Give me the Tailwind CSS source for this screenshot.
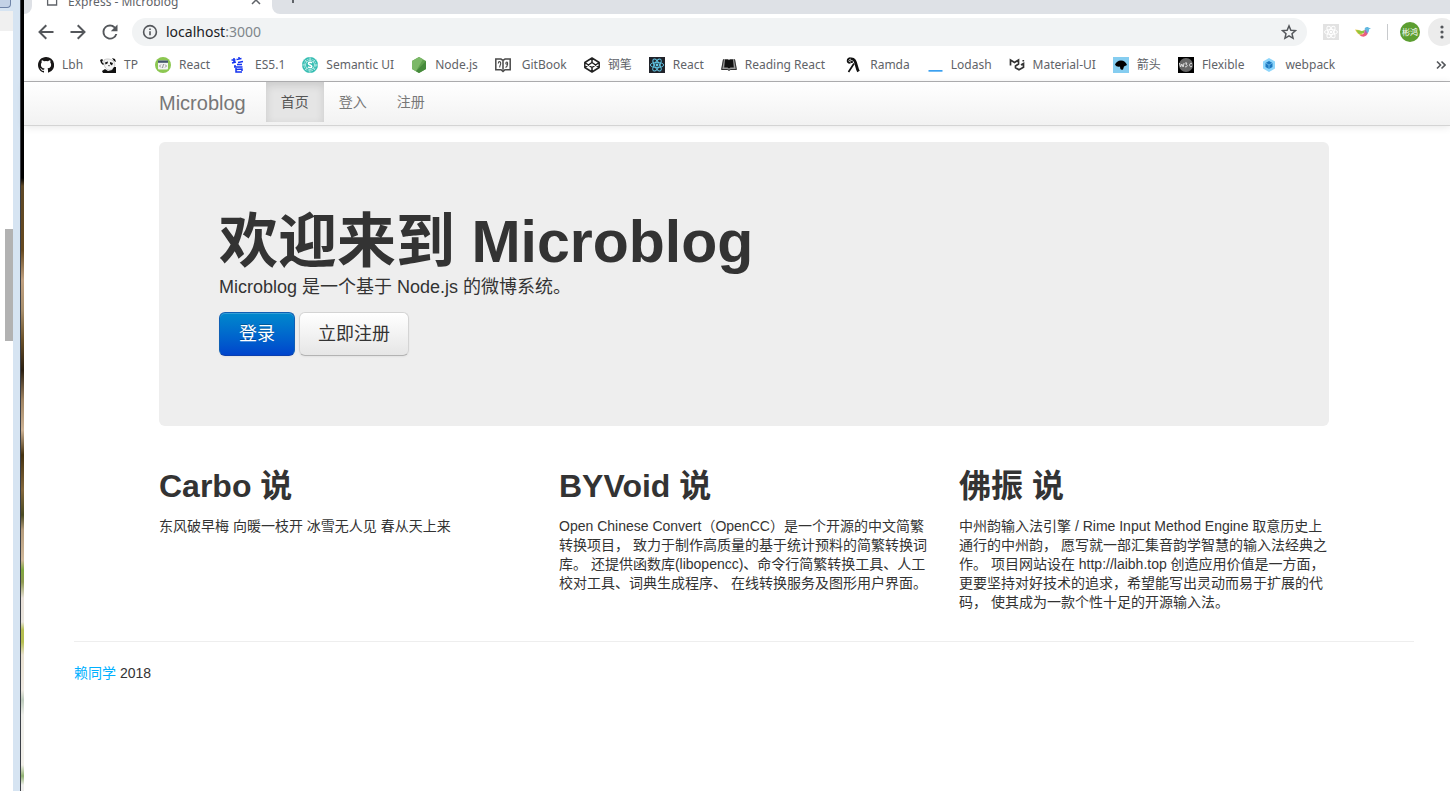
<!DOCTYPE html>
<html lang="zh-CN">
<head>
<meta charset="utf-8">
<title>Express - Microblog</title>
<script src="https://cdn.jsdelivr.net/npm/@tailwindcss/browser@4"></script>
</head>
<body class="min-h-screen overflow-hidden bg-white font-['Liberation_Sans','Noto_Sans_CJK_SC',sans-serif] text-sm text-[#333]">
<div class="flex min-h-screen">
  <!-- neighbouring window and desktop edge -->
  <aside class="flex w-6 shrink-0 bg-[#d6e4f2]">
    <div class="flex w-[13px] flex-col items-end bg-white">
      <div class="h-[11px] w-full bg-[#d6e4f2]"><div class="h-2 w-[11px] rounded-br-sm border-r border-b border-[#6f84a8] bg-[#c3d2e6]"></div></div>
      <div class="h-5 w-full bg-[#f0f0f0]"></div>
      <div class="mt-[198px] h-28 w-2 bg-[#b2b2b2]"></div>
    </div>
    <div class="w-[7px]"></div>
    <div class="w-px bg-[#3c4048]"></div>
    <div class="w-[3px] bg-[linear-gradient(to_bottom,#000_0px,#000_178px,#5e4827_186px,#66491f_250px,#c0a080_280px,#a88f6c_310px,#6a5028_340px,#2a1e10_370px,#a08462_400px,#cdb294_430px,#45310f_455px,#84683c_490px,#4a4a22_515px,#b59c7c_530px,#d0b89a_560px,#7fa83e_570px,#8f9a50_582px,#e8e0d8_598px,#e8e4dc_622px,#b5be50_630px,#b5be50_642px,#e8e0d0_655px,#eee9e2_690px,#bccabb_700px,#eeeeea_715px,#f2f0ea_765px,#8fb070_776px,#f0f0ee_785px)]"></div>
  </aside>

  <div class="flex min-w-0 flex-1 flex-col">
    <!-- browser chrome -->
    <header class="bg-white font-['Noto_Sans','Noto_Sans_CJK_SC',sans-serif]">
      <div class="flex h-[14px] items-end bg-[#dee1e6] text-[#5f6368]">
        <div class="flex h-[14px] w-2 bg-white"><div class="h-full w-full rounded-br-lg bg-[#dee1e6]"></div></div>
        <div class="flex h-[14px] w-[240px] items-end overflow-hidden bg-white pb-[2px] pl-[14px] text-xs">
          <svg class="mb-[6px] h-4 w-3" viewBox="0 0 12 16" fill="none" stroke="#5f6368" stroke-width="1.3"><path d="M1.6 1h6l3 3v11h-9z"/></svg>
          <span class="ml-[10px] leading-5">Express - Microblog</span>
          <svg class="mr-[10px] mb-[6px] ml-auto h-3 w-3" viewBox="0 0 12 12" stroke="#5f6368" stroke-width="1.5"><path d="M2 2l8 8M10 2l-8 8"/></svg>
        </div>
        <div class="h-[14px] w-5 bg-white"><div class="flex h-full w-full justify-end rounded-bl-lg bg-[#dee1e6]"></div></div>
        <div class="h-full w-[3px]"><div class="h-[3px] w-[2px] bg-[#5f6368]"></div></div>
      </div>
      <div class="flex h-9 items-center pl-3">
        <button aria-label="后退" class="mr-3"><svg class="h-5 w-5" viewBox="0 0 24 24" fill="#54575b"><path d="M21 10.8v2.4H7.1l6.1 6.1-1.7 1.7L2.5 12l9-9 1.7 1.7-6.1 6.1z"/></svg></button>
        <button aria-label="前进" class="mr-3"><svg class="h-5 w-5" viewBox="0 0 24 24" fill="#54575b"><path d="M3 10.8v2.4h13.9l-6.1 6.1 1.7 1.7 9-9-9-9-1.7 1.7 6.1 6.1z"/></svg></button>
        <button aria-label="重新加载" class="mr-3"><svg class="h-5 w-5" viewBox="0 0 24 24" fill="#54575b"><path d="M18.3 5.7A8.8 8.8 0 0 0 12 3a9 9 0 1 0 8.7 11.3h-2.4A6.7 6.7 0 1 1 12 5.3c1.9 0 3.5.8 4.7 2L13 11h8V3z"/></svg></button>
        <label class="flex h-7 min-w-0 flex-1 items-center rounded-full bg-[#f1f3f4] pr-[10px] pl-[10px]">
          <svg class="h-4 w-4 shrink-0" viewBox="0 0 16 16" fill="none" stroke="#54575b" stroke-width="1.6"><circle cx="8" cy="8" r="6.4"/><path d="M8 7.2v4M8 4.4v1.6"/></svg>
          <span class="ml-2 flex-1 text-sm text-[#202124]" role="textbox" aria-label="地址">localhost<span class="text-[#80868b]">:3000</span></span>
          <svg class="h-4 w-4" viewBox="0 0 24 24" fill="none" stroke="#54575b" stroke-width="2.2"><path d="M12 2.8l2.8 6.500 7 .6-5.300 4.600 1.600 6.900L12 17.700l-6.100 3.700 1.600-6.900L2.200 9.900l7-.6z"/></svg>
        </label>
        <button aria-label="React Developer Tools" class="ml-4"><svg class="h-4 w-4" viewBox="0 0 16 16"><path fill="#e2e2e2" d="M0 0h16v16H0z"/><g fill="none" stroke="#fff"><ellipse cx="8" cy="8" rx="6.500" ry="2.500"/><ellipse cx="8" cy="8" rx="6.500" ry="2.500" transform="rotate(60 8 8)"/><ellipse cx="8" cy="8" rx="6.500" ry="2.500" transform="rotate(120 8 8)"/></g><circle cx="8" cy="8" r="1.300" fill="#fff"/></svg></button>
        <button aria-label="扩展程序" class="ml-4"><svg class="h-4 w-4" viewBox="0 0 16 16"><path fill="#e8c84e" d="M0 5.500l4 .5 4 2-1 3.500C4 11 1.500 9 0 5.500z"/><path fill="#8dc63f" d="M1 6l6 1 3-1-1 3-5 1z"/><path fill="#ec5f7c" d="M4 10.500c3 1 5-.5 6-4l3 2c-1 4-5 6-9 2z"/><path fill="#a868b8" d="M10 5.500l3 1.500-1 3-2.500-2z"/><path fill="#62b8e0" d="M9.500 5.500C10 3 12 2.500 13.500 3.500L16 4.800l-2 .4c.2 2-.5 3-1.500 4l-1.500-3z"/></svg></button>
        <div class="ml-4 h-4 w-px bg-[#c8cacd]"></div>
        <button aria-label="个人资料" class="ml-3 h-5 w-5 rounded-full bg-[#5c9e31] text-[8px] leading-5 text-white">彬鸿</button>
        <div class="ml-2 h-7 w-[22px] shrink-0 overflow-hidden"><button aria-label="菜单" class="flex h-7 w-7 items-center justify-center rounded-full bg-[#ececec]"><svg class="h-4 w-4" viewBox="0 0 16 16" fill="#54575b"><circle cx="8" cy="3" r="1.600"/><circle cx="8" cy="8" r="1.600"/><circle cx="8" cy="13" r="1.600"/></svg></button></div>
      </div>
      <nav aria-label="书签" class="flex h-8 items-center gap-[17px] border-b border-[#b2b2b4] pb-[2px] pl-[14px] text-xs whitespace-nowrap text-[#5f6368]">
        <a href="#" class="flex items-center gap-2"><svg class="h-4 w-4" viewBox="0 0 16 16" fill="#191717"><path d="M8 0C3.580 0 0 3.580 0 8c0 3.540 2.290 6.530 5.470 7.590.4.070.55-.17.55-.38v-1.340c-2.230.48-2.700-1.070-2.700-1.070-.36-.92-.89-1.170-.89-1.170-.73-.5.060-.49.060-.49.8.06 1.230.83 1.230.83.71 1.230 1.870.87 2.330.66.07-.52.28-.87.5-1.070-1.780-.2-3.640-.89-3.640-3.950 0-.87.31-1.590.82-2.150-.08-.2-.36-1.020.08-2.120 0 0 .67-.21 2.200.82a7.600 7.600 0 0 1 4 0c1.530-1.040 2.200-.82 2.200-.82.44 1.100.16 1.920.08 2.120.51.56.82 1.270.82 2.150 0 3.070-1.870 3.750-3.650 3.950.29.25.54.73.54 1.480v2.200c0 .21.150.46.55.38A8 8 0 0 0 8 0z"/></svg>Lbh</a>
        <a href="#" class="flex items-center gap-2"><svg class="h-4 w-4" viewBox="0 0 16 16"><path fill="#f4f4f4" stroke="#999" stroke-width=".5" d="M4 3c3-2 8-1 10 2 2 4 0 7-3 8-4 1-8-3-7-10z"/><path fill="#111" d="M0 3l2-1 1 1-1 2 2 2-1 1-2-2zM12 1l3 1 1 3-2-1zM5 5.500l3-1-.5 2-2 1zM10 5l3 1-1 2.500-2-1.500zM2 14l3-2 3 2 4-1 2-3 2 0v6H3zM8 8l2 .5-1 1z"/></svg>TP</a>
        <a href="#" class="flex items-center gap-2"><svg class="h-4 w-4" viewBox="0 0 16 16"><circle cx="8" cy="8" r="8" fill="#8cc751"/><rect x="3" y="3.500" width="10" height="9" rx="1" fill="#f4f4f4"/><path fill="#45556c" d="M3 3.500h10v2.300H3z"/><path d="M6 7.500L4.500 9 6 10.500M10 7.500L11.500 9 10 10.500M8.500 7l-1 4" stroke="#777" stroke-width=".8" fill="none"/></svg>React</a>
        <a href="#" class="ml-1 flex items-center gap-2"><svg class="h-4 w-4" viewBox="0 0 16 16" fill="none" stroke="#1433f0" stroke-width="1.500"><path d="M3 1v4M.5 3h4M1 6l4-1M8 0v3M5.500 2.500l5-1M7 5.500l5-1M6 7.500h5M4 8v2.500M3 10h8.500M5 12.500l6-.5v2M5 11v4h6"/></svg>ES5.1</a>
        <a href="#" class="flex items-center gap-2"><svg class="h-4 w-4" viewBox="0 0 16 16"><circle cx="8" cy="8" r="8" fill="#35bdb2"/><g fill="none" stroke="#d8f4f1" stroke-width=".7"><circle cx="8" cy="8" r="6" stroke-dasharray="2 1"/><circle cx="8" cy="8" r="4.500"/><path d="M8 0v3.500M8 12.500v3.500M0 8h3.500M12.500 8h3.500M2.500 2.500l2.500 2.500M11 11l2.500 2.500M13.500 2.500L11 5M5 11l-2.500 2.500"/></g><path d="M10 6c-1-1-3.600-1-3.600.6C6.400 8.300 9.800 7.600 9.800 9.400c0 1.500-2.600 1.600-3.800.4" fill="none" stroke="#fff" stroke-width="1.500"/></svg>Semantic UI</a>
        <a href="#" class="flex items-center gap-2"><svg class="h-4 w-4" viewBox="0 0 16 16"><path fill="#5fa04e" d="M8 0l7 4v8l-7 4-7-4V4z"/><path fill="#7bb867" d="M8 0l4 2.300L5 14.300l-4-2.300V4z"/><path fill="#468a3c" d="M15 4v8l-7 4-3-1.700z"/></svg>Node.js</a>
        <a href="#" class="flex items-center gap-[11px]"><svg class="h-4 w-4" viewBox="0 0 16 16" fill="none" stroke="#4a4a4a" stroke-width="1.500"><path d="M8 14.500L6 12.700H.8V2H6l2 1.300L10 2h5.200v10.700H10zM8 3.300v9.500"/><path stroke-width="1.100" d="M3.300 6.500c0-2.500 2.400-2.500 2.400 0 0 1.500-1 1.500-1 4M10.500 10.500c2.500-1 2.500-5.500 1.300-5.500s-1.300 2.300 0 2.300"/></svg>GitBook</a>
        <a href="#" class="flex items-center gap-2"><svg class="h-4 w-4" viewBox="0 0 16 16" fill="none" stroke="#222" stroke-width="1.500" stroke-linejoin="round"><path d="M8 1l7.200 4.500v5L8 15 .8 10.500v-5zM8 1v4.500M8 10.500V15M.8 5.500L8 10.500l7.200-5M.8 10.500L8 5.500l7.200 5"/></svg>钢笔</a>
        <a href="#" class="flex items-center gap-2"><svg class="h-4 w-4" viewBox="0 0 16 16"><path fill="#20232a" d="M0 0h16v16H0z"/><g fill="none" stroke="#61c8e8" stroke-width=".9"><ellipse cx="8" cy="8" rx="6.700" ry="2.600"/><ellipse cx="8" cy="8" rx="6.700" ry="2.600" transform="rotate(60 8 8)"/><ellipse cx="8" cy="8" rx="6.700" ry="2.600" transform="rotate(120 8 8)"/></g><circle cx="8" cy="8" r="1.400" fill="#61c8e8"/></svg>React</a>
        <a href="#" class="flex items-center gap-2"><svg class="h-4 w-4" viewBox="0 0 16 16"><path fill="#999" d="M2 2h5l1 .8 1-.8h5l2 11H9.500l-1.500.9-1.500-.9H0z"/><path fill="#111" d="M4 2.500h3l1 .8 1-.8h3l.8 8H9.500L8 11.500l-1.500-1H3.200z"/><path fill="none" stroke="#222" stroke-width=".9" d="M2.500 2.500L.7 12.500h6l1.300.8 1.300-.8h6L13.500 2.500"/></svg>Reading React</a>
        <a href="#" class="ml-1 flex items-center gap-2"><svg class="h-4 w-4" viewBox="0 0 16 16" fill="none" stroke="#111"><path stroke-width="1.700" d="M4 6C.5 5.500 1 1.500 4.500 1.200M8 6.500L2.500 15"/><path stroke-width="2.800" d="M4.500 2c6-1 5 7 8 12.500"/><path stroke-width="1" d="M3 3.500l4 1.500-3 1"/></svg>Ramda</a>
        <a href="#" class="flex items-center gap-2"><svg class="h-4 w-4" viewBox="0 0 16 16"><path fill="#3aa0f0" d="M1.500 13h14v1.700h-14z"/></svg>Lodash</a>
        <a href="#" class="flex items-center gap-2"><svg class="h-4 w-4" viewBox="0 0 16 16" fill="none" stroke="#333" stroke-width="1.700"><path d="M1.500 8.500V3l4 2.500 4-2.500v4L6.500 9v1.800l3.500 2 4.500-2.600V6.500L12 8M14.300 3v1.500"/></svg>Material-UI</a>
        <a href="#" class="flex items-center gap-2"><svg class="h-4 w-4" viewBox="0 0 16 16"><path fill="#85cdf0" d="M0 0h16v16H0z"/><path d="M2 7.500c1-2 3-4 6-4 3 0 5 2 6 4.500l-3 1.500-1 3c-2 1-3-.5-3-3-2 .5-4 0-5-2z"/></svg>箭头</a>
        <a href="#" class="flex items-center gap-2"><svg class="h-4 w-4" viewBox="0 0 16 16"><path d="M0 0h16v16H0z"/><circle cx="8" cy="8" r="7" fill="#666"/><path stroke="#ddd" fill="none" d="M1.500 6l1 4 1.300-3 1.300 3 1-4M7 6h2L8 7.500c2 0 1.500 3-1 2.300M14 6.500c-3-1.500-3.500 4.500 0 3"/></svg>Flexible</a>
        <a href="#" class="flex items-center gap-2"><svg class="h-4 w-4" viewBox="0 0 16 16"><path fill="#8ed6fb" d="M8 1l6 3.500v7L8 15l-6-3.500v-7z"/><path fill="#1c78c0" d="M8 4l3.500 2v4L8 12l-3.500-2V6z"/><path d="M4.500 6L8 8l3.500-2M8 8v4" stroke="#8ed6fb" stroke-width=".6" fill="none"/></svg>webpack</a>
        <button aria-label="更多书签" class="mr-1 ml-auto"><svg class="h-[10px] w-[10px]" viewBox="0 0 10 10" fill="none" stroke="#54575b" stroke-width="1.600"><path d="M1 1.500L4.500 5 1 8.500M5.500 1.500L9 5 5.500 8.500"/></svg></button>
      </nav>
    </header>

    <div class="border-b border-[#d4d4d4] bg-linear-to-b from-white to-[#f2f2f2] pr-9 pl-[50px] shadow-[0_1px_8px_rgba(0,0,0,0.1)]">
      <nav aria-label="主导航" class="mx-auto flex h-[43px] max-w-[1170px] items-start text-[#777]">
        <a href="#" class="mr-5 text-xl leading-[42px]">Microblog</a>
        <a href="#" aria-current="page" class="bg-[#e5e5e5] px-[15px] leading-10 text-[#555] shadow-[inset_0_3px_8px_rgba(0,0,0,0.125)]">首页</a>
        <a href="#" class="px-[15px] leading-10">登入</a>
        <a href="#" class="px-[15px] leading-10">注册</a>
      </nav>
    </div>

    <div class="pt-4 pr-9 pl-[50px]">
      <main class="mx-auto max-w-[1170px]">
        <section class="mb-10 rounded-md bg-[#eee] px-[60px] pt-[66px] pb-[70px]">
          <h1 class="text-[59px] leading-[68px] font-bold">欢迎来到 Microblog</h1>
          <p class="text-lg leading-[22px]">Microblog 是一个基于 Node.js 的微博系统。</p>
          <div class="mt-[14px] flex gap-1 text-lg">
            <button class="h-11 rounded-md border border-[#0f5fb4] border-b-[#0a3fae] bg-linear-to-b from-[#0088cc] to-[#0044cc] px-[19px] text-white shadow-[inset_0_1px_0_rgba(255,255,255,0.2),0_1px_2px_rgba(0,0,0,0.05)] [text-shadow:0_-1px_0_rgba(0,0,0,0.25)]">登录</button>
            <button class="h-11 rounded-md border border-[#d4d4d4] border-b-[#b3b3b3] bg-linear-to-b from-white to-[#e6e6e6] px-[18px] shadow-[inset_0_1px_0_rgba(255,255,255,0.2),0_1px_2px_rgba(0,0,0,0.05)]">立即注册</button>
          </div>
        </section>
        <div class="grid grid-cols-3 gap-[30px] leading-[19px]">
          <section>
            <h2 class="mb-[11px] text-[32px] leading-10 font-bold">Carbo 说</h2>
            <p>东风破早梅 向暖一枝开 冰雪无人见 春从天上来</p>
          </section>
          <section>
            <h2 class="mb-[11px] text-[32px] leading-10 font-bold">BYVoid 说</h2>
            <p>Open Chinese Convert（OpenCC）是一个开源的中文简繁转换项目， 致力于制作高质量的基于统计预料的简繁转换词库。 还提供函数库(libopencc)、命令行简繁转换工具、人工校对工具、词典生成程序、 在线转换服务及图形用户界面。</p>
          </section>
          <section>
            <h2 class="mb-[11px] text-[32px] leading-10 font-bold">佛振 说</h2>
            <p>中州韵输入法引擎 / Rime Input Method Engine 取意历史上通行的中州韵， 愿写就一部汇集音韵学智慧的输入法经典之作。 项目网站设在 http://laibh.top 创造应用价值是一方面，更要坚持对好技术的追求，希望能写出灵动而易于扩展的代码， 使其成为一款个性十足的开源输入法。</p>
          </section>
        </div>
      </main>
      <hr class="mt-[29px] border-[#eee]">
      <footer class="pt-[21px] leading-5"><a href="#" class="text-[#00b0ff]">赖同学</a> 2018</footer>
    </div>
  </div>
</div>
</body>
</html>
